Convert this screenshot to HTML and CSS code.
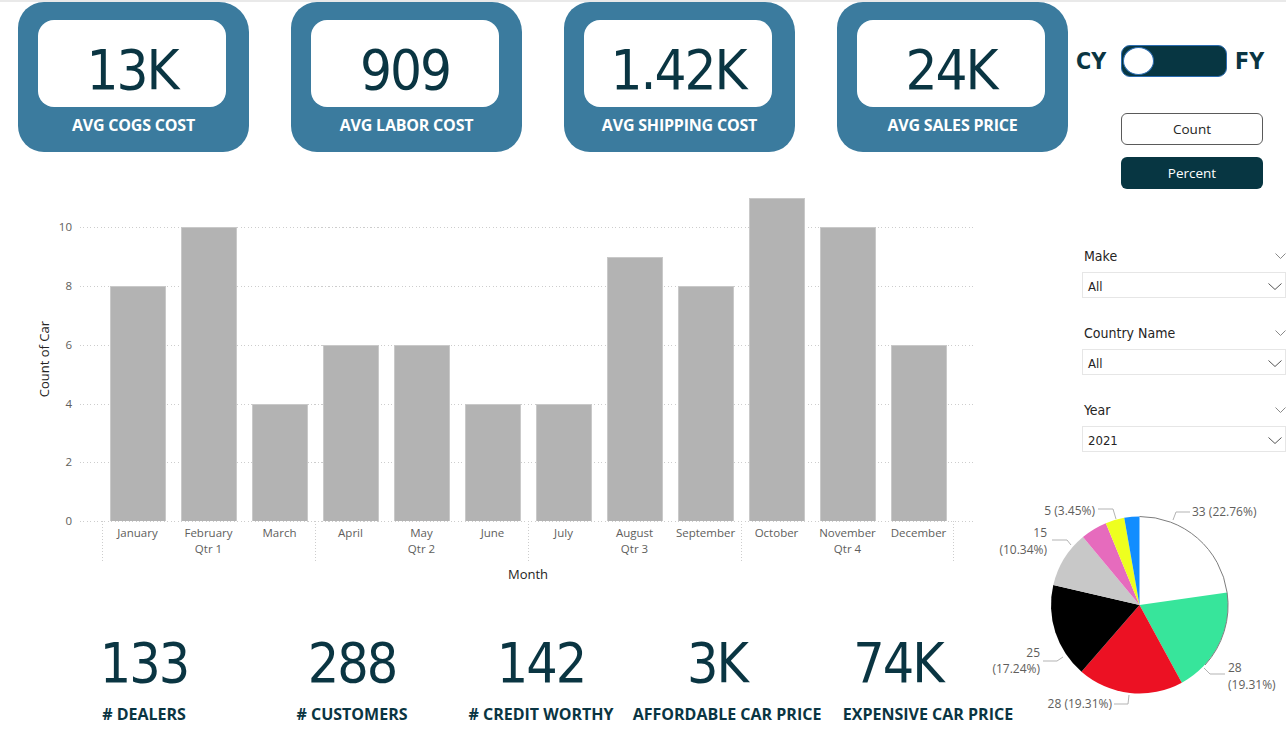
FILE: index.html
```html
<!DOCTYPE html>
<html lang="en">
<head>
<meta charset="utf-8">
<title>Car Sales Dashboard</title>
<link rel="stylesheet" href="styles.css">
</head>
<body>
<div class="page">
  <main class="main">
    <section class="cards">
      <div class="card"><div class="card-value">13K</div><div class="card-label">AVG COGS COST</div></div>
      <div class="card"><div class="card-value">909</div><div class="card-label">AVG LABOR COST</div></div>
      <div class="card"><div class="card-value">1.42K</div><div class="card-label">AVG SHIPPING COST</div></div>
      <div class="card"><div class="card-value">24K</div><div class="card-label">AVG SALES PRICE</div></div>
    </section>

    <section class="chart">
      <div class="y-title"><span>Count of Car</span></div>
      <div class="chart-main">
        <div class="plot">
          <div class="grid">
            <div class="grow"></div>
            <div class="grow"><span class="tick">10</span><i class="gline"></i></div>
            <div class="grow"><span class="tick">8</span><i class="gline"></i></div>
            <div class="grow"><span class="tick">6</span><i class="gline"></i></div>
            <div class="grow"><span class="tick">4</span><i class="gline"></i></div>
            <div class="grow"><span class="tick">2</span><i class="gline"></i></div>
            <div class="grow"><span class="tick">0</span><i class="gline"></i></div>
          </div>
          <div class="bars">
            <div class="bar" style="height:72.73%"></div>
            <div class="bar" style="height:90.91%"></div>
            <div class="bar" style="height:36.36%"></div>
            <div class="bar" style="height:54.55%"></div>
            <div class="bar" style="height:54.55%"></div>
            <div class="bar" style="height:36.36%"></div>
            <div class="bar" style="height:36.36%"></div>
            <div class="bar" style="height:81.82%"></div>
            <div class="bar" style="height:72.73%"></div>
            <div class="bar" style="height:100%"></div>
            <div class="bar" style="height:90.91%"></div>
            <div class="bar" style="height:54.55%"></div>
          </div>
        </div>
        <div class="xaxis">
          <div class="qtr"><div class="months"><span>January</span><span>February</span><span>March</span></div><div class="qlabel">Qtr 1</div></div>
          <div class="qtr"><div class="months"><span>April</span><span>May</span><span>June</span></div><div class="qlabel">Qtr 2</div></div>
          <div class="qtr"><div class="months"><span>July</span><span>August</span><span>September</span></div><div class="qlabel">Qtr 3</div></div>
          <div class="qtr qtr-last"><div class="months"><span>October</span><span>November</span><span>December</span></div><div class="qlabel">Qtr 4</div></div>
        </div>
        <div class="x-title">Month</div>
      </div>
    </section>

    <section class="kpis">
      <div class="kpi"><div class="kpi-value">133</div><div class="kpi-label"># DEALERS</div></div>
      <div class="kpi"><div class="kpi-value">288</div><div class="kpi-label"># CUSTOMERS</div></div>
      <div class="kpi"><div class="kpi-value">142</div><div class="kpi-label"># CREDIT WORTHY</div></div>
      <div class="kpi"><div class="kpi-value shift-sm">3K</div><div class="kpi-label">AFFORDABLE CAR PRICE</div></div>
      <div class="kpi"><div class="kpi-value shift-lg">74K</div><div class="kpi-label">EXPENSIVE CAR PRICE</div></div>
    </section>
  </main>

  <aside class="side">
    <div class="toggle-row">
      <span class="cy">CY</span>
      <div class="toggle"><div class="knob"></div></div>
      <span class="fy">FY</span>
    </div>
    <div class="buttons">
      <div class="btn btn-outline">Count</div>
      <div class="btn btn-solid">Percent</div>
    </div>
    <div class="slicers">
      <div class="slicer">
        <div class="slicer-head"><span class="slicer-title">Make</span><svg class="chev-head" width="11" height="6" viewBox="0 0 11 6"><path d="M0.5 0.5 L5.5 5.5 L10.5 0.5" fill="none" stroke="#8a8a8a" stroke-width="1"/></svg></div>
        <div class="slicer-box"><span>All</span><svg width="14" height="7" viewBox="0 0 14 7"><path d="M0.5 0.5 L7 6.5 L13.5 0.5" fill="none" stroke="#555" stroke-width="1"/></svg></div>
      </div>
      <div class="slicer">
        <div class="slicer-head"><span class="slicer-title">Country Name</span><svg class="chev-head" width="11" height="6" viewBox="0 0 11 6"><path d="M0.5 0.5 L5.5 5.5 L10.5 0.5" fill="none" stroke="#8a8a8a" stroke-width="1"/></svg></div>
        <div class="slicer-box"><span>All</span><svg width="14" height="7" viewBox="0 0 14 7"><path d="M0.5 0.5 L7 6.5 L13.5 0.5" fill="none" stroke="#555" stroke-width="1"/></svg></div>
      </div>
      <div class="slicer">
        <div class="slicer-head"><span class="slicer-title">Year</span><svg class="chev-head" width="11" height="6" viewBox="0 0 11 6"><path d="M0.5 0.5 L5.5 5.5 L10.5 0.5" fill="none" stroke="#8a8a8a" stroke-width="1"/></svg></div>
        <div class="slicer-box"><span>2021</span><svg width="14" height="7" viewBox="0 0 14 7"><path d="M0.5 0.5 L7 6.5 L13.5 0.5" fill="none" stroke="#555" stroke-width="1"/></svg></div>
      </div>
    </div>
    <div class="pie">
      <svg width="296" height="215" viewBox="0 0 296 215">
        <path d="M149.5 105 L149.5 16.5 A88.5 88.5 0 0 1 237.12 92.58 Z" fill="#ffffff"/>
        <path d="M149.5 105 L237.12 92.58 A88.5 88.5 0 0 1 191.8 182.74 Z" fill="#37E59B"/>
        <path d="M149.5 105 L191.8 182.74 A88.5 88.5 0 0 1 91.47 171.82 Z" fill="#EC1123"/>
        <path d="M149.5 105 L91.47 171.82 A88.5 88.5 0 0 1 63.28 85.05 Z" fill="#000000"/>
        <path d="M149.5 105 L63.28 85.05 A88.5 88.5 0 0 1 92.95 36.93 Z" fill="#C8C8C8"/>
        <path d="M149.5 105 L92.95 36.93 A88.5 88.5 0 0 1 115.86 23.14 Z" fill="#E66BBD"/>
        <path d="M149.5 105 L115.86 23.14 A88.5 88.5 0 0 1 134.24 17.83 Z" fill="#EEFF1F"/>
        <path d="M149.5 105 L134.24 17.83 A88.5 88.5 0 0 1 149.5 16.5 Z" fill="#118DFF"/>
        <path d="M149.5 16.5 A88.5 88.5 0 0 1 237.12 92.58 A88.5 88.5 0 0 1 215 165" fill="none" stroke="#7d7d7d" stroke-width="1"/>
        <g class="leader" fill="none" stroke="#b3b3b3" stroke-width="1">
          <path d="M183 20 L186 12 L200 12"/>
          <path d="M108 9 L123 9 L126 19"/>
          <path d="M62 40 L77 40 L81 45"/>
          <path d="M53 161 L67 161 L73 157"/>
          <path d="M214 168 L220 174 L235 174"/>
          <path d="M124 204 L138 204 L139 195"/>
        </g>
        <g class="pie-text">
          <text x="202" y="16">33 (22.76%)</text>
          <text x="105" y="15" text-anchor="end">5 (3.45%)</text>
          <text x="57" y="37" text-anchor="end">15</text>
          <text x="57" y="54" text-anchor="end">(10.34%)</text>
          <text x="50" y="157" text-anchor="end">25</text>
          <text x="50" y="173" text-anchor="end">(17.24%)</text>
          <text x="238" y="172">28</text>
          <text x="238" y="189">(19.31%)</text>
          <text x="122" y="208" text-anchor="end">28 (19.31%)</text>
        </g>
      </svg>
    </div>
  </aside>
</div>
</body>
</html>
```

FILE: styles.css
```css
* { box-sizing: border-box; }

body {
  margin: 0;
  background: #ffffff;
  font-family: "Open Sans", "Noto Sans", sans-serif;
}

.page {
  width: 1286px;
  height: 735px;
  overflow: hidden;
  display: grid;
  grid-template-columns: 1070px 216px;
  border-top: 2px solid #e9e9e9;
}

/* ---------- top cards ---------- */
.cards {
  display: flex;
  gap: 42px;
  padding-left: 18px;
}

.card {
  width: 231px;
  height: 150px;
  background: #3B7B9E;
  border-radius: 26px 30px 26px 26px;
  padding-top: 18px;
}

.card-value {
  width: 188px;
  height: 87px;
  margin-left: 20px;
  background: #ffffff;
  border-radius: 16px;
  padding-top: 22px;
  text-align: center;
  font-family: "DejaVu Sans Condensed", "DejaVu Sans", sans-serif;
  font-stretch: condensed;
  font-size: 56px;
  line-height: 56px;
  letter-spacing: -2px;
  color: #0A3542;
}

.card-label {
  margin-top: 8px;
  text-align: center;
  color: #ffffff;
  font-weight: 700;
  font-size: 16px;
  line-height: 20px;
  letter-spacing: -0.2px;
  white-space: nowrap;
}

/* ---------- column chart ---------- */
.chart {
  display: flex;
  margin-top: 46px;
  padding-left: 30px;
}

.y-title {
  width: 28px;
  height: 323px;
  display: flex;
  align-items: center;
  justify-content: center;
}

.y-title span {
  writing-mode: vertical-rl;
  transform: rotate(180deg);
  font-size: 13px;
  line-height: 18px;
  color: #252423;
  white-space: nowrap;
}

.chart-main {
  width: 915px;
}

.plot {
  display: grid;
  grid-template-rows: 323px;
  height: 323px;
}

.grid,
.bars {
  grid-area: 1 / 1;
}

.grid {
  display: grid;
  grid-template-rows: 1fr 2fr 2fr 2fr 2fr 2fr 0;
  height: 323px;
}

.grow {
  display: flex;
  align-items: flex-start;
  min-height: 0;
}

.tick {
  width: 14px;
  margin-right: 8px;
  margin-top: -8px;
  text-align: right;
  font-size: 11.5px;
  line-height: 16px;
  color: #605E5C;
}

.gline {
  flex: 1;
  height: 1px;
  background-image: repeating-linear-gradient(to right, #cdcdcd 0 1px, transparent 1px 3.5px);
}

.bars {
  display: grid;
  grid-template-columns: repeat(12, 71px);
  grid-template-rows: 323px;
  align-items: end;
  height: 323px;
  margin-left: 44px;
}

.bar {
  margin: 0 7.5px;
  background: #B3B3B3;
  border: 1px solid #c9c9c9;
  border-bottom: none;
}

.xaxis {
  display: grid;
  grid-template-columns: repeat(4, 213px);
  height: 40px;
  margin-left: 44px;
}

.qtr {
  background-image: repeating-linear-gradient(to bottom, #cdcdcd 0 1px, transparent 1px 3px);
  background-size: 1px 100%;
  background-repeat: no-repeat;
  background-position: left top;
}

.qtr-last {
  background-image:
    repeating-linear-gradient(to bottom, #cdcdcd 0 1px, transparent 1px 3px),
    repeating-linear-gradient(to bottom, #cdcdcd 0 1px, transparent 1px 3px);
  background-size: 1px 100%, 1px 100%;
  background-position: left top, right top;
}

.months {
  display: grid;
  grid-template-columns: repeat(3, 1fr);
  padding-top: 4px;
}

.months span,
.qlabel {
  text-align: center;
  font-size: 11.5px;
  line-height: 16px;
  color: #605E5C;
  white-space: nowrap;
}

.x-title {
  width: 852px;
  margin: 4px 0 0 44px;
  text-align: center;
  font-size: 13px;
  line-height: 18px;
  color: #252423;
}

/* ---------- bottom KPIs ---------- */
.kpis {
  display: grid;
  grid-template-columns: 200px 216px 162px 210px 192px;
  padding-left: 44px;
  margin-top: 53px;
}

.kpi {
  display: flex;
  flex-direction: column;
  align-items: center;
}

.kpi-value {
  font-family: "DejaVu Sans Condensed", "DejaVu Sans", sans-serif;
  font-stretch: condensed;
  font-size: 55px;
  line-height: 55px;
  letter-spacing: -2px;
  color: #0A3542;
}

.kpi-value.shift-sm { padding-right: 20px; }
.kpi-value.shift-lg { padding-right: 60px; }

.kpi-label {
  margin-top: 13px;
  font-weight: 700;
  font-size: 16px;
  line-height: 20px;
  color: #0A3542;
  white-space: nowrap;
}

/* ---------- right side ---------- */
.side {
  display: flex;
  flex-direction: column;
}

.toggle-row {
  display: flex;
  align-items: center;
  height: 32px;
  margin-top: 43px;
  padding-left: 6px;
}

.cy,
.fy {
  font-family: "DejaVu Sans Condensed", "DejaVu Sans", sans-serif;
  font-stretch: condensed;
  font-weight: 700;
  font-size: 23px;
  color: #0A3542;
}

.cy {
  width: 30px;
  margin-right: 15px;
}

.fy {
  margin-left: 8px;
}

.toggle {
  width: 106px;
  height: 32px;
  background: #073642;
  border: 1px solid #2B6CB0;
  border-radius: 9px;
  display: flex;
  align-items: center;
  padding-left: 1px;
}

.knob {
  width: 31px;
  height: 28px;
  border-radius: 50%;
  background: #ffffff;
  border: 1px solid #2B6CB0;
}

.buttons {
  display: flex;
  flex-direction: column;
  gap: 12px;
  width: 142px;
  margin: 36px 0 0 51px;
}

.btn {
  height: 32px;
  border-radius: 6px;
  display: flex;
  align-items: center;
  justify-content: center;
  font-size: 13.5px;
}

.btn-outline {
  border: 1px solid #5a5a5a;
  background: #ffffff;
  color: #252423;
}

.btn-solid {
  background: #073642;
  color: #ffffff;
}

.slicers {
  width: 204px;
  margin: 58px 0 0 12px;
}

.slicer {
  margin-bottom: 26px;
}

.slicer:last-child {
  margin-bottom: 0;
}

.slicer-head {
  display: flex;
  justify-content: space-between;
  align-items: center;
  height: 18px;
  padding-left: 2px;
}

.slicer-title {
  font-family: "DejaVu Sans Condensed", "DejaVu Sans", sans-serif;
  font-stretch: condensed;
  font-size: 14px;
  color: #252423;
}

.slicer-box {
  display: flex;
  justify-content: space-between;
  align-items: center;
  height: 26px;
  margin-top: 7px;
  padding: 2px 3px 0 5px;
  border: 1px solid #e6e6e6;
  font-family: "DejaVu Sans Condensed", "DejaVu Sans", sans-serif;
  font-stretch: condensed;
  font-size: 13px;
  color: #252423;
}

.pie {
  width: 296px;
  height: 215px;
  margin: 48px 0 0 -80px;
}

.pie svg {
  display: block;
}

.pie-text text {
  font-family: "Open Sans", "Noto Sans", sans-serif;
  font-size: 12px;
  fill: #605E5C;
}
```
